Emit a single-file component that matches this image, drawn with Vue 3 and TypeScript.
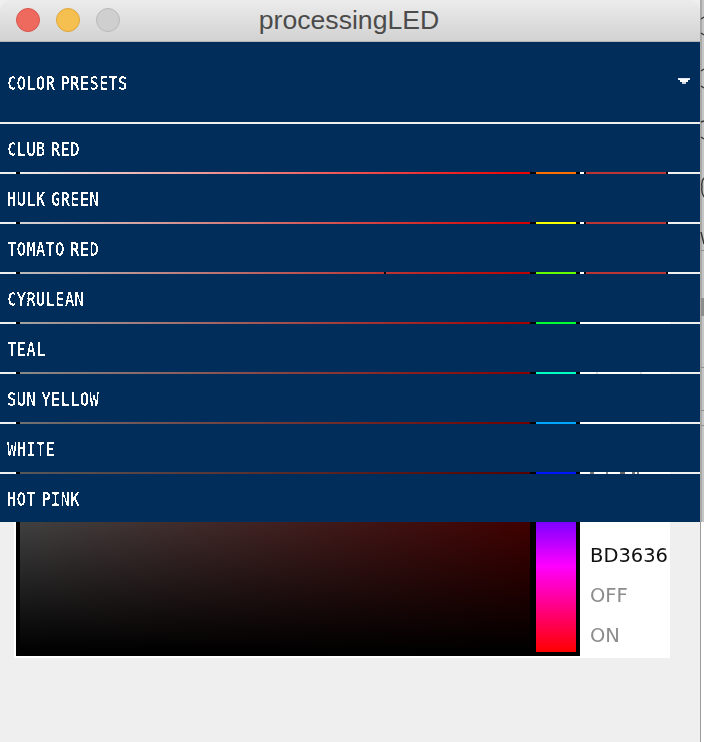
<script setup lang="ts">
const presets: string[] = ['CLUB RED', 'HULK GREEN', 'TOMATO RED', 'CYRULEAN', 'TEAL', 'SUN YELLOW', 'WHITE', 'HOT PINK']

interface Tick { x: number; y: number; w: number; c: string }
const ticks: Tick[] = [
  { x: 16, y: 241, w: 2, c: '#dddddd' },
  { x: 60, y: 241, w: 2, c: '#dddddd' },
  { x: 10, y: 341, w: 4, c: '#777777' },
  { x: 26, y: 341, w: 2, c: '#888888' },
  { x: 40, y: 341, w: 5, c: '#666666' },
  { x: 52, y: 341, w: 3, c: '#777777' },
  { x: 57, y: 341, w: 2, c: '#777777' }
]
const tickStyle = (t: Tick) => ({ left: `${t.x}px`, top: `${t.y}px`, width: `${t.w}px`, background: t.c })
</script>

<template>
  <div class="screen">
    <svg class="defs" width="0" height="0" aria-hidden="true">
      <filter id="crisp" x="0" y="0" width="100%" height="100%">
        <feComponentTransfer>
          <feFuncA type="discrete" tableValues="0 0 0 1" />
        </feComponentTransfer>
      </filter>
    </svg>

    <div class="window">
      <header class="titlebar">
        <div class="lights">
          <span class="light red"></span>
          <span class="light yellow"></span>
          <span class="light gray"></span>
        </div>
        <span class="title">processingLED</span>
      </header>

      <main class="body">
        <section class="panel">
          <div class="picker">
            <div class="sv">
              <span class="cursor"></span>
            </div>
            <div class="hue"></div>
          </div>
          <div class="side">
            <div class="swatch"></div>
            <div class="values">
              <span class="hex">BD3636</span>
              <span class="state">OFF</span>
              <span class="state">ON</span>
            </div>
            <span v-for="(t, i) in ticks" :key="i" class="tick" :style="tickStyle(t)"></span>
          </div>
        </section>

        <nav class="menu">
          <div class="menu-head">
            <span class="label"><span class="glyphs">COLOR PRESETS</span></span>
            <svg class="caret" width="12" height="6" viewBox="0 0 12 6">
              <rect x="0" y="0" width="12" height="2" fill="#e4e8ee" />
              <rect x="1" y="1" width="10" height="1" fill="#fff" />
              <rect x="2" y="2" width="8" height="2" fill="#fff" />
              <rect x="4" y="4" width="4" height="2" fill="#cfd6df" />
            </svg>
          </div>
          <div v-for="p in presets" :key="p" class="menu-item">
            <span class="label"><span class="glyphs">{{ p }}</span></span>
          </div>
        </nav>
      </main>
    </div>

    <svg class="strip" width="4" height="742" viewBox="0 0 4 742">
      <rect x="0" y="0" width="4" height="522" fill="#c6c6c6" />
      <rect x="0" y="0" width="2" height="522" fill="#a9a9a9" />
      <rect x="0" y="522" width="4" height="220" fill="#ffffff" />
      <rect x="0" y="522" width="1" height="220" fill="#9c9c9c" />
      <rect x="1" y="298" width="3" height="18" fill="#8d8d8d" />
      <g fill="#8f8f8f">
        <rect x="1" y="250" width="3" height="1" />
        <rect x="1" y="367" width="3" height="1" />
        <rect x="1" y="410" width="3" height="1" />
        <rect x="1" y="425" width="3" height="1" />
      </g>
      <g stroke="#333333" stroke-width="1.4" fill="none">
        <path d="M1 19 L4 17" />
        <path d="M1 33 L4 35" />
        <path d="M1 71 L4 69" />
        <path d="M1 86 L4 88" />
        <path d="M1 122 L4 121" />
        <path d="M1 137 L4 139" />
        <path d="M4 178 Q1 181 2 187 Q1 192 4 197" />
        <path d="M1 232 L4 244" />
      </g>
    </svg>
  </div>
</template>

<style>
html,
body {
  margin: 0;
  background: #efefef;
}
</style>

<style scoped>
.screen {
  display: flex;
  width: 704px;
  height: 742px;
  overflow: hidden;
  background: #c6c6c6;
}

.defs {
  position: absolute;
}

.window {
  display: flex;
  flex-direction: column;
  width: 700px;
  height: 742px;
  background: #efefef;
}

.strip {
  display: block;
  flex: none;
}

.titlebar {
  box-sizing: border-box;
  position: relative;
  display: flex;
  align-items: center;
  justify-content: center;
  flex: none;
  height: 42px;
  padding: 0 2px 2px 0;
  background: linear-gradient(#ececec, #d2d2d2);
  border-bottom: 1px solid #b4b4b4;
  border-radius: 10px 10px 0 0;
}

.lights {
  position: absolute;
  left: 16px;
  top: 8px;
  display: flex;
  gap: 16px;
}

.light {
  box-sizing: border-box;
  width: 24px;
  height: 24px;
  border-radius: 50%;
  border: 1px solid;
}

.red {
  background: #ee6a5f;
  border-color: #d9574c;
}

.yellow {
  background: #f6c050;
  border-color: #e0a63c;
}

.gray {
  background: #cfcfcf;
  border-color: #b9b9b9;
}

.title {
  font-family: "Liberation Sans", sans-serif;
  font-size: 26.6px;
  color: #4b4b4b;
  line-height: 30px;
}

.body {
  position: relative;
  flex: 1;
  padding-top: 89px;
}

.panel {
  box-sizing: border-box;
  display: flex;
  width: 656px;
  height: 527px;
  margin-left: 14px;
  padding: 0 0 2px 2px;
  background: #ffffff;
}

.picker {
  box-sizing: border-box;
  display: flex;
  gap: 6px;
  width: 564px;
  padding: 4px;
  background: #000000;
}

.sv {
  position: relative;
  flex: 1;
  background:
    linear-gradient(rgba(0, 0, 0, 0), #000000),
    linear-gradient(90deg, #ffffff, #ff0000);
}

.cursor {
  position: absolute;
  left: 364px;
  top: 137px;
  width: 2px;
  height: 2px;
  background: #000000;
}

.hue {
  flex: none;
  width: 40px;
  background: linear-gradient(#ff0000, #ffff00, #00ff00, #00ffff, #0000ff, #ff00ff, #ff0000);
}

.side {
  position: relative;
  flex: 1;
  display: flex;
  flex-direction: column;
  justify-content: space-between;
}

.swatch {
  box-sizing: border-box;
  width: 84px;
  height: 160px;
  margin: 9px 0 0 4px;
  background: #bd3636;
  border: 2px solid #000000;
}

.values {
  display: flex;
  flex-direction: column;
  gap: 16px;
  padding: 0 0 8px 10px;
  font-family: "DejaVu Sans", sans-serif;
  font-size: 19.5px;
  line-height: 24px;
  filter: blur(0.4px);
}

.hex {
  color: #111111;
}

.state {
  color: #8c8c8c;
}

.tick {
  position: absolute;
  height: 2px;
}

.menu {
  position: absolute;
  left: 0;
  right: 0;
  top: 0;
  display: flex;
  flex-direction: column;
  gap: 2px;
}

.menu-head,
.menu-item {
  display: flex;
  align-items: center;
  justify-content: space-between;
  padding: 4px 10px 0 7px;
  box-sizing: border-box;
  background: #002d5a;
}

.menu-head {
  height: 80px;
}

.menu-item {
  height: 48px;
}

.label {
  display: block;
  filter: url(#crisp);
  color: #ffffff;
  line-height: 22px;
}

.glyphs {
  display: inline-block;
  transform: scaleX(0.84);
  transform-origin: left center;
  font-family: "DejaVu Sans Mono", monospace;
  font-weight: 700;
  font-size: 19px;
  word-spacing: -5px;
  white-space: pre;
}

.caret {
  display: block;
  margin-bottom: 6px;
}
</style>
